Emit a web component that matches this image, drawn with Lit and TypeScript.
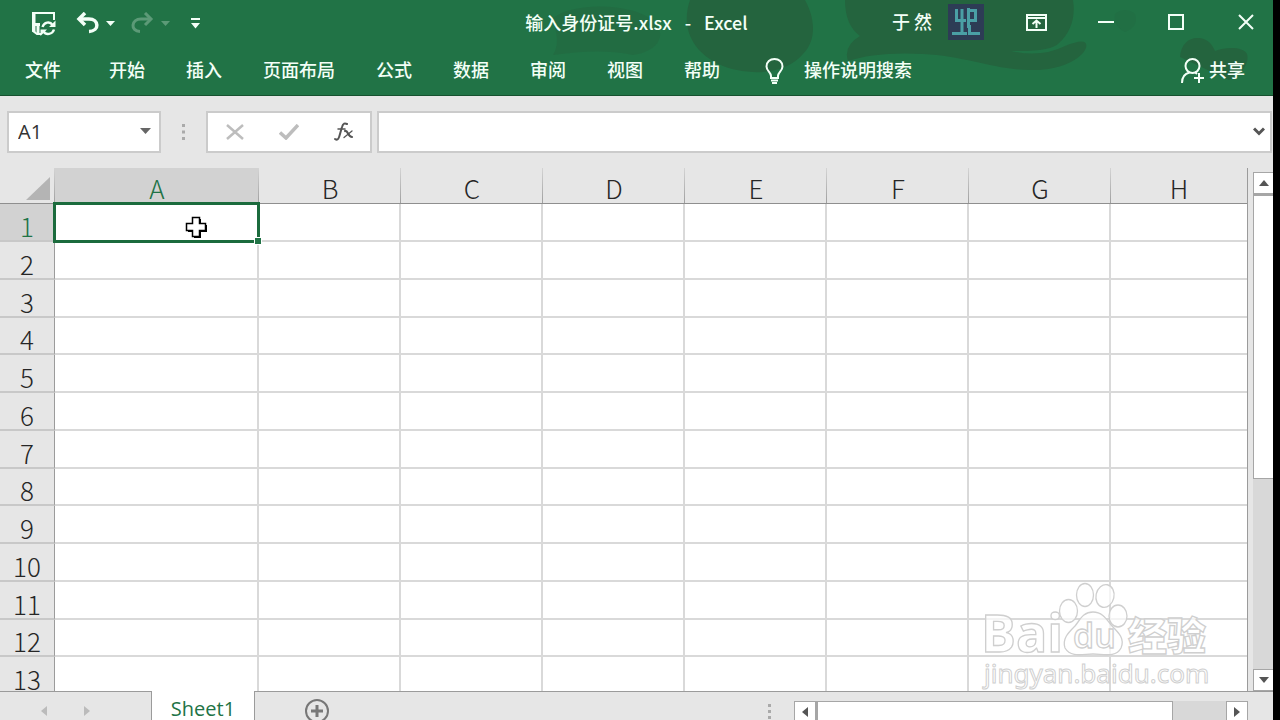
import { LitElement, html, css, svg } from "lit";
import { customElement, state } from "lit/decorators.js";

const COLUMNS = ["A", "B", "C", "D", "E", "F", "G", "H"];
const ROWS = Array.from({ length: 13 }, (_, i) => i + 1);
const TABS = ["开始", "插入", "页面布局", "公式", "数据", "审阅", "视图", "帮助"];

/** Title bar and ribbon tabs. */
@customElement("excel-header")
class ExcelHeader extends LitElement {
  static styles = css`
    :host {
      display: block;
      position: relative;
      background: #217346;
      border-bottom: 1px solid #17512f;
      color: #f3fff7;
      font-family: "Noto Sans CJK SC", sans-serif;
      font-size: 18px;
      line-height: 26px;
      overflow: hidden;
    }
    .backdrop {
      position: absolute;
      top: 0;
      right: 0;
      width: 720px;
      height: 96px;
    }
    button {
      border: 0;
      padding: 0;
      background: none;
      color: inherit;
      font: inherit;
      display: flex;
      align-items: center;
      justify-content: center;
      white-space: nowrap;
    }
    svg {
      display: block;
    }
    .title-bar {
      position: relative;
      display: grid;
      grid-template-columns: 1fr auto 1fr;
      height: 44px;
      align-items: center;
    }
    .quick {
      display: flex;
      align-items: center;
      padding: 2px 0 0 32px;
    }
    .save {
      margin: 2px 20px 0 0;
    }
    .caret {
      width: 9px;
      margin: 0 16px 0 7px;
    }
    .off {
      opacity: 0.28;
    }
    .more {
      margin-left: 5px;
    }
    .title {
      margin: 0;
      font-size: 18px;
      font-weight: 500;
      display: flex;
      gap: 13px;
    }
    .right {
      display: flex;
      align-items: center;
      justify-content: flex-end;
    }
    .user {
      font-weight: 500;
      padding-bottom: 2px;
    }
    .avatar {
      margin: 0 25px 0 16px;
    }
    .controls {
      display: flex;
      gap: 16px;
    }
    .controls button {
      width: 54px;
      height: 44px;
    }
    .ribbon {
      position: relative;
      display: flex;
      align-items: center;
      height: 51px;
      padding: 0 28px 0 25px;
      font-weight: 500;
    }
    .ribbon button {
      padding-bottom: 2px;
    }
    .file {
      margin-right: 48px;
    }
    nav {
      display: flex;
      gap: 41px;
    }
    .tell {
      margin-left: 45px;
      gap: 20px;
    }
    .share {
      margin-left: auto;
      gap: 5px;
    }
    .ribbon svg {
      margin-top: 4px;
    }
  `;

  render() {
    const caret = svg`<path d="M0 0H9L4.5 5Z" fill="currentColor"/>`;
    return html`
      <svg class="backdrop" viewBox="560 0 720 96" aria-hidden="true">
        <g fill="#24643e">
          <path opacity=".45" d="M560 18C580 2 640 2 662 22C675 38 662 52 640 55C610 49 585 52 560 55C568 42 562 30 560 18Z" />
          <path d="M697 0H812C822 18 824 40 810 54C794 72 768 75 744 70C712 64 684 38 697 0Z" />
          <path d="M852 0H1080Q1084 26 1066 43Q1058 52 1018 51Q1048 58 1072 46Q1096 36 1093 48C1088 60 1066 70 1042 70C1004 71 974 56 930 54C900 52 872 55 855 61Q850 46 867 36Q852 25 852 0Z" />
          <path d="M1187 57C1188 43 1197 37 1206 38C1215 39 1219 44 1222 51C1232 47 1250 46 1254 54C1257 63 1248 75 1236 80Z" />
          <path opacity=".25" d="M1122 14Q1132 6 1142 14Q1146 26 1132 32Q1120 26 1122 14Z" />
        </g>
      </svg>
      <div class="title-bar">
        <div class="quick">
          <button class="save" aria-label="保存">
            <svg width="24" height="24" viewBox="0 0 24 24" fill="none" stroke="currentColor" stroke-width="2">
              <path d="M9 22H5L1 19V1H22V8" /><path d="M2 1V20" stroke-width="3" /><path d="M2 12.500H8M6 13V22" stroke-width="3" />
              <path d="M10.500 15C12 10 18 9 20.500 13M22 17.500C20.500 22.500 14 23.500 11.500 19.500" stroke-width="2.400" />
              <path d="M23.500 8.500V15H17ZM8.500 24V17.500H15Z" fill="currentColor" stroke="none" />
            </svg>
          </button>
          <button aria-label="撤消">
            <svg width="23" height="22" viewBox="0 0 23 22" fill="none" stroke="currentColor" stroke-width="3.500">
              <path d="M9 1L3 7L9 13" /><path d="M3 7H13C23 7 24 19 13 19.500" />
            </svg>
          </button>
          <button class="caret" aria-label="撤消选项"><svg width="9" height="5">${caret}</svg></button>
          <button class="off" aria-label="恢复">
            <svg width="23" height="22" viewBox="0 0 23 22" fill="none" stroke="currentColor" stroke-width="3">
              <path d="M14 1L20 7L14 13" /><path d="M20 7H10C0 7 -1 19 9 19.500" />
            </svg>
          </button>
          <button class="caret off" aria-label="恢复选项"><svg width="9" height="5">${caret}</svg></button>
          <button class="more" aria-label="自定义快速访问工具栏">
            <svg width="9" height="11" viewBox="0 0 9 11" fill="currentColor"><path d="M0 0H9V2H0ZM0 5H9L4.500 10.500Z" /></svg>
          </button>
        </div>
        <h1 class="title"><span>输入身份证号.xlsx</span><span>-</span><span>Excel</span></h1>
        <div class="right">
          <span class="user">于 然</span>
          <svg class="avatar" width="36" height="36" viewBox="0 0 36 36" fill="none" stroke="#4a9fa5" stroke-width="3" role="img" aria-label="头像">
            <path d="M0 0H36V36H0Z" fill="#2d3c55" stroke="none" />
            <path d="M8.500 5V16.500H18M14 5V15M14 18V29M4 29.500H19M20.500 4V24M20 6.500H27.500V16.500H20M21.500 21V29.500H32" />
          </svg>
          <div class="controls">
            <button aria-label="功能区显示选项">
              <svg width="21" height="17" viewBox="0 0 21 17" fill="none" stroke="currentColor" stroke-width="2">
                <path d="M1 1H20V16H1ZM1 4H20" /><path d="M10.500 14V7M6.500 10L10.500 6.500L14.500 10" />
              </svg>
            </button>
            <button aria-label="最小化"><svg width="16" height="2"><path d="M0 0H16V2H0Z" fill="currentColor" /></svg></button>
            <button aria-label="最大化">
              <svg width="16" height="16" fill="none" stroke="currentColor" stroke-width="2"><path d="M1 1H15V15H1Z" /></svg>
            </button>
            <button aria-label="关闭">
              <svg width="16" height="16" fill="none" stroke="currentColor" stroke-width="2"><path d="M1 1L15 15M15 1L1 15" /></svg>
            </button>
          </div>
        </div>
      </div>
      <div class="ribbon">
        <button class="file">文件</button>
        <nav>${TABS.map((t) => html`<button>${t}</button>`)}</nav>
        <button class="tell">
          <svg width="19" height="26" viewBox="0 0 19 26" fill="none" stroke="currentColor" stroke-width="2">
            <path d="M6 18C6 14 1.500 13 1.500 8.500C1.500 4 5 1 9.500 1S17.500 4 17.500 8.500C17.500 13 13 14 13 18V20H6ZM6 22.500H13M7 25H12" />
          </svg>
          操作说明搜索
        </button>
        <button class="share">
          <svg width="23" height="26" viewBox="0 0 23 26" fill="none" stroke="currentColor" stroke-width="2">
            <circle cx="11.500" cy="8" r="7" /><path d="M1 25C1 19 4 15.500 8.500 14.500M14 14L16 16M18 15V25M13 20H23" />
          </svg>
          共享
        </button>
      </div>
    `;
  }
}

/** Name box, edit buttons and formula input. */
@customElement("formula-bar")
class FormulaBar extends LitElement {
  static styles = css`
    :host {
      display: flex;
      align-items: flex-start;
      padding: 15px 1px 15px 7px;
      font-family: "Open Sans", sans-serif;
      color: #333;
    }
    svg {
      display: block;
    }
    .box {
      display: flex;
      align-items: center;
      box-sizing: border-box;
      height: 42px;
      background: #fff;
      border: 2px solid #cbcbcb;
    }
    .name {
      width: 154px;
    }
    input {
      flex: 1;
      min-width: 0;
      border: 0;
      outline: 0;
      padding: 0 0 0 9px;
      background: none;
      color: inherit;
      font: 20px/26px "Open Sans", sans-serif;
    }
    button {
      border: 0;
      padding: 0;
      background: none;
      color: inherit;
    }
    .drop {
      padding: 0 8px 2px;
    }
    .dots {
      margin: 13px 20px 0 21px;
    }
    .edit {
      width: 166px;
      justify-content: space-between;
      padding: 0 16px 0 18px;
      margin-right: 5px;
    }
    .formula {
      flex: 1;
    }
    .expand {
      padding: 0 5px 2px;
    }
  `;

  render() {
    return html`
      <div class="box name">
        <input aria-label="名称框" value="A1" />
        <button class="drop" aria-label="名称列表">
          <svg width="11" height="6"><path d="M0 0H11L5.500 6Z" fill="#666" /></svg>
        </button>
      </div>
      <svg class="dots" width="4" height="17" fill="#aaa"><path d="M0 0H3V3H0ZM0 6.500H3V9.500H0ZM0 13H3V16H0Z" /></svg>
      <div class="box edit">
        <button aria-label="取消">
          <svg width="18" height="16" fill="none" stroke="#bdbdbd" stroke-width="2.500"><path d="M1 1L17 15M17 1L1 15" /></svg>
        </button>
        <button aria-label="输入">
          <svg width="20" height="16" fill="none" stroke="#bdbdbd" stroke-width="3.500"><path d="M1 8.500L7 14L19 1" /></svg>
        </button>
        <button aria-label="插入函数">
          <svg width="20" height="20" viewBox="0 0 20 20" fill="none" stroke="#555" stroke-linecap="round">
            <path d="M1 17C4 19 5 16 6 12L8 5C9 1 11 1 13 2" stroke-width="2" /><path d="M4 7H11" stroke-width="1.500" />
            <path d="M11 9C14 8 14 15 18 15" stroke-width="2.200" /><path d="M18 9L10 15.500" stroke-width="1.300" />
          </svg>
        </button>
      </div>
      <div class="box formula">
        <input aria-label="编辑栏" />
        <button class="expand" aria-label="展开编辑栏">
          <svg width="12" height="9" fill="none" stroke="#555" stroke-width="3"><path d="M1 1.500L6 6.500L11 1.500" /></svg>
        </button>
      </div>
    `;
  }
}

/** Cell grid with its column and row headings. */
@customElement("sheet-grid")
class SheetGrid extends LitElement {
  static styles = css`
    :host {
      display: block;
      position: relative;
      overflow: hidden;
      min-height: 0;
      border-right: 1px solid #9b9b9b;
    }
    table {
      width: 100%;
      table-layout: fixed;
      border-collapse: separate;
      border-spacing: 0;
      font: 26px/28px "Noto Sans CJK SC", sans-serif;
      color: #262626;
    }
    th,
    td {
      box-sizing: border-box;
      padding: 0;
      height: 38px;
      border: 0 solid #d9d9d9;
      border-width: 0 2px 2px 0;
      background: #fff;
    }
    tbody tr:nth-child(4n) > * {
      height: 37px;
    }
    th {
      font-weight: 300;
      background: #e6e6e6;
    }
    thead th {
      height: 36px;
      padding-top: 5px;
      border-width: 0 0 1px;
      border-color: #8f8f8f;
      background: linear-gradient(#d4d4d4, #a0a0a0) right / 1px 100% no-repeat #e6e6e6;
    }
    tbody th {
      padding-top: 7px;
      border-color: #c8c8c8;
      border-right: 1px solid #9b9b9b;
    }
    tr > :last-child {
      border-right-width: 0;
    }
    thead th:last-child {
      background: #e6e6e6;
    }
    .corner-col {
      width: 55px;
    }
    .first-col {
      width: 204px;
    }
    .col {
      width: 142px;
    }
    thead .active,
    tbody .active {
      background-color: #d2d2d2;
      color: #217346;
    }
    .corner svg {
      display: block;
      margin: 0 5px 0 auto;
    }
    .selected {
      position: relative;
    }
    .frame {
      position: absolute;
      inset: -2px -3px -3px -2px;
      border: 3px solid #1b6b3d;
    }
    .handle {
      position: absolute;
      right: -5px;
      bottom: -5px;
      width: 6px;
      height: 6px;
      background: #217346;
      border: 1px solid #fff;
    }
    .pointer {
      position: absolute;
      left: 129px;
      top: 11px;
    }
    .watermark {
      position: absolute;
      right: 30px;
      bottom: 0;
      pointer-events: none;
    }
    .brand {
      font: 700 52px "Open Sans", sans-serif;
    }
    .inner {
      font: 600 34px "Open Sans", sans-serif;
    }
    .cjk {
      font: 900 39px "Noto Sans CJK SC", sans-serif;
    }
    .site {
      font: 400 26px "Noto Sans", sans-serif;
    }
  `;

  render() {
    return html`
      <table>
        <colgroup>
          <col class="corner-col" />
          <col class="first-col" />
          ${COLUMNS.slice(1, -1).map(() => html`<col class="col" />`)}
          <col />
        </colgroup>
        <thead>
          <tr>
            <th class="corner" aria-label="全选"><svg width="24" height="23"><path d="M24 0V23H0Z" fill="#b4b4b4" /></svg></th>
            ${COLUMNS.map((c) => html`<th scope="col" class=${c === "A" ? "active" : ""}>${c}</th>`)}
          </tr>
        </thead>
        <tbody>
          ${ROWS.map(
            (r) => html`<tr>
              <th scope="row" class=${r === 1 ? "active" : ""}>${r}</th>
              ${COLUMNS.map((c) =>
                r === 1 && c === "A"
                  ? html`<td class="selected">
                      <div class="frame">
                        <div class="handle"></div>
                        <svg class="pointer" width="23" height="23" viewBox="0 0 23 23">
                          <path d="M9 3H16V9H22V16H16V22H9V16H3V9H9Z" fill="#000" />
                          <path d="M7.500 1.500H14.500V7.500H20.500V14.500H14.500V20.500H7.500V14.500H1.500V7.500H7.500Z" fill="#fff" stroke="#000" stroke-width="1.500" />
                        </svg>
                      </div>
                    </td>`
                  : html`<td></td>`
              )}
            </tr>`
          )}
        </tbody>
      </table>
      <svg class="watermark" width="236" height="112" viewBox="0 0 236 112" fill="#fff" fill-opacity=".7" stroke="#cfcfcf" stroke-width="1.300">
        <text class="brand" x="0" y="73">Bai</text>
        <ellipse cx="87.500" cy="32" rx="9" ry="11.500" />
        <ellipse cx="104" cy="16" rx="8.500" ry="11.500" />
        <ellipse cx="124" cy="17" rx="9" ry="11.500" transform="rotate(12 124 17)" />
        <ellipse cx="137" cy="37" rx="9" ry="11" />
        <path d="M112 33C122 33 126 41 131 47C138 54 144 60 140 69C135 79 122 75 112 75S90 79 84 69C81 60 87 54 94 47C99 41 102 33 112 33Z" />
        <text class="inner" x="92" y="69">du</text>
        <text class="cjk" x="147" y="71">经验</text>
        <text class="site" x="3" y="104" stroke-width="1">jingyan.baidu.com</text>
      </svg>
    `;
  }
}

@customElement("app-root")
class AppRoot extends LitElement {
  @state() private sheet = "Sheet1";

  static styles = css`
    :host {
      display: flex;
      flex-direction: column;
      box-sizing: border-box;
      height: 100vh;
      overflow: hidden;
      background: #e6e6e6;
      border-right: 7px solid #000;
    }
    svg {
      display: block;
    }
    button {
      box-sizing: border-box;
      border: 0;
      padding: 0;
      background: none;
      display: flex;
      align-items: center;
      justify-content: center;
      flex: none;
    }
    main {
      flex: 1;
      min-height: 0;
      display: grid;
      grid-template: minmax(0, 1fr) / minmax(0, 1fr) 20px;
      column-gap: 5px;
    }
    .vertical {
      display: flex;
      flex-direction: column;
      padding-top: 4px;
    }
    .arrow {
      width: 22px;
      height: 22px;
      background: #fff;
      border: 1px solid #a6a6a6;
    }
    .vertical .arrow {
      width: 20px;
      border-right: 0;
    }
    .track {
      flex: 1;
      display: flex;
      background: #d8d8d8;
    }
    .vertical .track {
      flex-direction: column;
    }
    .thumb {
      box-sizing: border-box;
      background: #fff;
      border: 1px solid #a6a6a6;
    }
    .vertical .thumb {
      height: 60%;
      border-width: 2px 0 1px 1px;
    }
    .horizontal .thumb {
      width: 87%;
      border-left-width: 2px;
    }
    footer {
      flex: none;
      height: 29px;
      display: flex;
      overflow: hidden;
    }
    .line {
      border-top: 1px solid #9b9b9b;
    }
    .steps {
      box-sizing: border-box;
      width: 152px;
      display: flex;
      align-items: flex-start;
      gap: 37px;
      padding: 14px 0 0 41px;
      border-right: 1px solid #9b9b9b;
    }
    .sheet {
      width: 102px;
      height: 29px;
      padding-top: 6px;
      background: #fff;
      color: #217346;
      font: 20px/22px "Open Sans", sans-serif;
    }
    .rest {
      flex: 1;
      display: flex;
      align-items: flex-start;
      border-left: 1px solid #9b9b9b;
    }
    .add {
      margin: 7px 0 0 50px;
    }
    .grip {
      margin: 12px 23px 0 auto;
    }
    .horizontal {
      display: flex;
      width: 454px;
      height: 22px;
      margin: 9px 25px 0 0;
    }
  `;

  private tri(d: string, w: number, h: number, fill = "#555") {
    return html`<svg width=${w} height=${h} fill=${fill}><path d=${d} /></svg>`;
  }

  render() {
    return html`
      <excel-header></excel-header>
      <formula-bar></formula-bar>
      <main>
        <sheet-grid></sheet-grid>
        <div class="vertical">
          <button class="arrow" aria-label="向上滚动">${this.tri("M0 6H10L5 0Z", 10, 6)}</button>
          <div class="track"><div class="thumb"></div></div>
          <button class="arrow" aria-label="向下滚动">${this.tri("M0 0H10L5 6Z", 10, 6)}</button>
        </div>
      </main>
      <footer>
        <div class="steps line">
          <button aria-label="上一个工作表">${this.tri("M6 0V10L0 5Z", 6, 10, "#bbb")}</button>
          <button aria-label="下一个工作表">${this.tri("M0 0V10L6 5Z", 6, 10, "#bbb")}</button>
        </div>
        <button class="sheet">${this.sheet}</button>
        <div class="rest line">
          <button class="add" aria-label="新工作表">
            <svg width="24" height="24" fill="none" stroke="#777"><circle cx="12" cy="12" r="11" stroke-width="2" /><path d="M12 6V18M6 12H18" stroke-width="3" /></svg>
          </button>
          <svg class="grip" width="3" height="16" fill="#aaa"><path d="M0 0H3V3H0ZM0 6H3V9H0ZM0 12H3V15H0Z" /></svg>
          <div class="horizontal">
            <button class="arrow" aria-label="向左滚动">${this.tri("M6 0V10L0 5Z", 6, 10)}</button>
            <div class="track"><div class="thumb"></div></div>
            <button class="arrow" aria-label="向右滚动">${this.tri("M0 0V10L6 5Z", 6, 10)}</button>
          </div>
        </div>
      </footer>
    `;
  }
}
